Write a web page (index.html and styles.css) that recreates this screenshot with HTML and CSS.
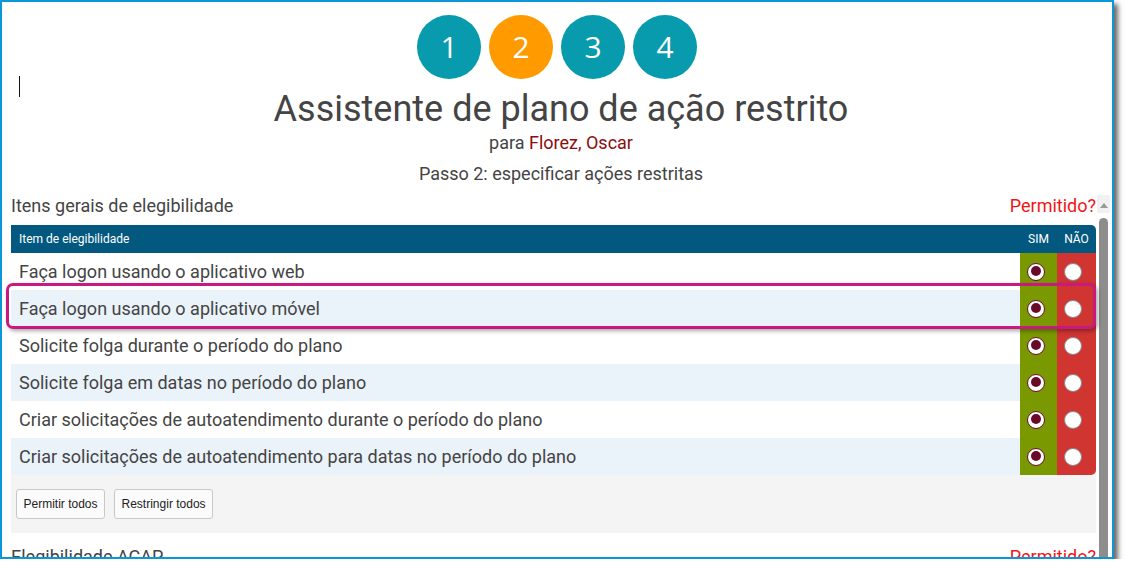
FILE: index.html
```html
<!DOCTYPE html>
<html lang="pt">
<head>
<meta charset="utf-8">
<title>Assistente de plano de ação restrito</title>
<link rel="stylesheet" href="styles.css">
</head>
<body>
<div class="frame">
  <span class="caret"></span>
  <header class="wizard-head">
    <div class="steps">
      <span class="step">1</span>
      <span class="step current">2</span>
      <span class="step">3</span>
      <span class="step">4</span>
    </div>
    <h1 class="title">Assistente de plano de ação restrito</h1>
    <p class="subtitle">para <span class="person">Florez, Oscar</span></p>
    <p class="step-label">Passo 2: especificar ações restritas</p>
  </header>
  <div class="scroll-area">
    <div class="scroll-content">
      <section class="group">
        <div class="group-head">
          <span class="group-title">Itens gerais de elegibilidade</span>
          <span class="allowed">Permitido?</span>
        </div>
        <div class="grid">
          <div class="row head">
            <div class="label">Item de elegibilidade</div>
            <div class="yes">SIM</div>
            <div class="no">NÃO</div>
          </div>
          <div class="row">
            <div class="label">Faça logon usando o aplicativo web</div>
            <div class="yes"><span class="radio checked"></span></div>
            <div class="no"><span class="radio"></span></div>
          </div>
          <div class="row alt">
            <div class="label">Faça logon usando o aplicativo móvel</div>
            <div class="yes"><span class="radio checked"></span></div>
            <div class="no"><span class="radio"></span></div>
          </div>
          <div class="row">
            <div class="label">Solicite folga durante o período do plano</div>
            <div class="yes"><span class="radio checked"></span></div>
            <div class="no"><span class="radio"></span></div>
          </div>
          <div class="row alt">
            <div class="label">Solicite folga em datas no período do plano</div>
            <div class="yes"><span class="radio checked"></span></div>
            <div class="no"><span class="radio"></span></div>
          </div>
          <div class="row">
            <div class="label">Criar solicitações de autoatendimento durante o período do plano</div>
            <div class="yes"><span class="radio checked"></span></div>
            <div class="no"><span class="radio"></span></div>
          </div>
          <div class="row alt last">
            <div class="label">Criar solicitações de autoatendimento para datas no período do plano</div>
            <div class="yes"><span class="radio checked"></span></div>
            <div class="no"><span class="radio"></span></div>
          </div>
        </div>
        <div class="actions">
          <button class="btn">Permitir todos</button>
          <button class="btn">Restringir todos</button>
        </div>
      </section>
      <section class="group next">
        <div class="group-head">
          <span class="group-title">Elegibilidade ACAP</span>
          <span class="allowed">Permitido?</span>
        </div>
      </section>
    </div>
    <div class="scrollbar">
      <span class="arrow-cell"><span class="arrow-up"></span></span>
      <span class="thumb"></span>
    </div>
  </div>
  <div class="highlight"></div>
</div>
</body>
</html>
```

FILE: styles.css
```css
html, body {
  margin: 0;
  padding: 0;
  background: #ffffff;
}

body {
  font-family: Roboto, "Liberation Sans", Arial, sans-serif;
  color: #444444;
}

.frame {
  position: relative;
  width: 1114px;
  height: 559px;
  box-sizing: border-box;
  border: 2px solid #0a97d8;
  box-shadow: 4px 4px 5px rgba(0, 0, 0, 0.6);
  background: #ffffff;
  overflow: hidden;
  display: flex;
  flex-direction: column;
}

.caret {
  position: absolute;
  left: 17px;
  top: 74px;
  width: 1px;
  height: 21px;
  background: #111111;
}

.wizard-head {
  flex: none;
  height: 193px;
  text-align: center;
}

.steps {
  display: flex;
  justify-content: center;
  gap: 8px;
  padding-top: 13px;
}

.step {
  width: 64px;
  height: 64px;
  border-radius: 50%;
  background: #089bad;
  color: #ffffff;
  font-family: "Open Sans", Roboto, sans-serif;
  font-size: 30px;
  line-height: 64px;
  text-align: center;
}

.step.current {
  background: #ff9a00;
}

.title {
  margin: 9px 0 0;
  padding-left: 8px;
  font-size: 36px;
  line-height: 42px;
  font-weight: 400;
  color: #444444;
}

.subtitle {
  margin: 2px 0 0;
  padding-left: 8px;
  font-size: 18px;
  line-height: 22px;
  color: #444444;
}

.person {
  color: #8c0d0d;
}

.step-label {
  margin: 9px 0 0;
  padding-left: 8px;
  font-size: 18px;
  line-height: 22px;
  color: #444444;
}

.scroll-area {
  flex: 1;
  display: flex;
  min-height: 0;
}

.scroll-content {
  flex: 1;
  padding: 0 1px 0 9px;
  min-width: 0;
}

.group-head {
  display: flex;
  justify-content: space-between;
  align-items: baseline;
  font-size: 18px;
  line-height: 22px;
}

.allowed {
  color: #f21616;
}

.grid {
  margin-top: 8px;
}

.row {
  display: flex;
  height: 37px;
  background: #ffffff;
}

.row.alt {
  background: #eaf2fa;
}

.row .label {
  flex: 1;
  display: flex;
  align-items: center;
  padding-left: 8px;
  font-size: 18px;
  color: #444444;
  white-space: nowrap;
}

.row .yes,
.row .no {
  display: flex;
  align-items: center;
  justify-content: flex-start;
  box-sizing: border-box;
  padding-left: 7px;
}

.row .yes {
  width: 37px;
  background: #7a9900;
}

.row .no {
  width: 39px;
  background: #d03531;
}

.row.last .no {
  border-bottom-right-radius: 5px;
}

.row.head {
  height: 28px;
  background: #02587f;
  border-top-right-radius: 5px;
  color: #ffffff;
  font-size: 12px;
}

.row.head .label {
  font-size: 12px;
  color: #ffffff;
}

.row.head .yes,
.row.head .no {
  background: transparent;
  color: #ffffff;
  font-size: 12px;
  justify-content: center;
  padding-left: 0;
}

.radio {
  width: 18px;
  height: 18px;
  box-sizing: border-box;
  border-radius: 50%;
  background: #ffffff;
  border: 1px solid #8a8a8a;
  position: relative;
}

.radio.checked {
  border: 1.5px solid #6e0c2c;
}

.radio.checked::after {
  content: "";
  position: absolute;
  left: 2.5px;
  top: 2.5px;
  width: 10px;
  height: 10px;
  border-radius: 50%;
  background: #6b0a28;
}

.actions {
  display: flex;
  gap: 9px;
  height: 58px;
  box-sizing: border-box;
  padding: 14px 0 0 5px;
  background: #f4f4f4;
}

.btn {
  height: 30px;
  padding: 0 6.5px;
  border: 1px solid #c8c8c8;
  border-radius: 3px;
  background: #fbfbfb;
  color: #222222;
  font-family: "Liberation Sans", Arial, sans-serif;
  font-size: 12px;
}

.group.next {
  margin-top: 13px;
}

.scrollbar {
  flex: none;
  width: 15px;
  display: flex;
  flex-direction: column;
  background: #ffffff;
}

.arrow-cell {
  height: 18px;
  width: 13px;
  background: #f1f1f1;
  display: flex;
  justify-content: center;
  padding-top: 8px;
  box-sizing: border-box;
}

.arrow-up {
  width: 0;
  height: 0;
  border-left: 4px solid transparent;
  border-right: 4px solid transparent;
  border-bottom: 5px solid #999999;
}

.thumb {
  flex: 1;
  width: 9px;
  margin: 5px 0 0 2px;
  background: #8d8d8d;
  border-radius: 5px 5px 0 0;
}

.highlight {
  position: absolute;
  left: 4px;
  top: 281px;
  width: 1090px;
  height: 46px;
  box-sizing: border-box;
  border: 3px solid #c8197f;
  border-radius: 7px;
  box-shadow: 2px 2px 4px rgba(0, 0, 0, 0.35);
}
```
